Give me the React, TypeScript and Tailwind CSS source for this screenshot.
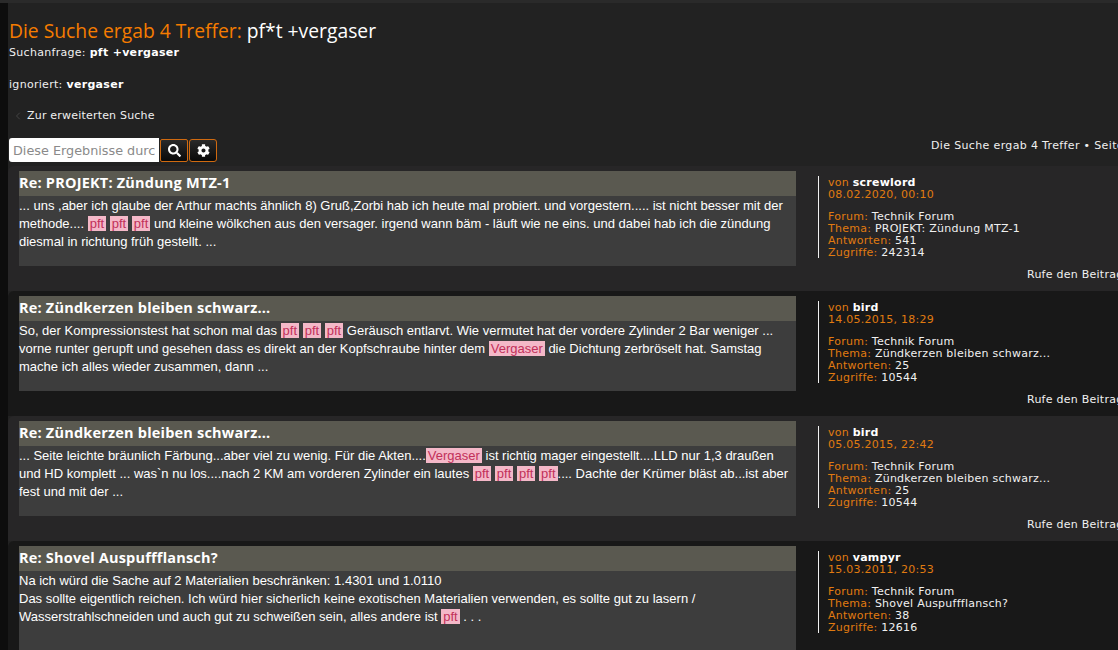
import React from 'react';
import { ChevronLeft } from 'lucide-react';
import { FaCog, FaSearch } from 'react-icons/fa';

const Hl = ({ children }: { children: React.ReactNode }) => (
  <span className="bg-[#f4b8c8] text-[#c2305a] px-[2px]">{children}</span>
);

type Post = {
  title: string;
  body: React.ReactNode;
  author: string;
  date: string;
  topic: string;
  replies: string;
  views: string;
  dark: boolean;
  tall?: boolean;
};

const pft = (
  <>
    <Hl>pft</Hl> <Hl>pft</Hl> <Hl>pft</Hl>
  </>
);

const posts: Post[] = [
  {
    title: 'Re: PROJEKT: Zündung MTZ-1',
    body: (
      <>
        ... uns ,aber ich glaube der Arthur machts ähnlich 8) Gruß,Zorbi hab ich heute mal probiert. und vorgestern..... ist nicht besser mit der methode.... {pft} und kleine wölkchen aus den versager. irgend wann bäm - läuft wie ne eins. und dabei hab ich die zündung diesmal in richtung früh gestellt. ...
      </>
    ),
    author: 'screwlord',
    date: '08.02.2020, 00:10',
    topic: 'PROJEKT: Zündung MTZ-1',
    replies: '541',
    views: '242314',
    dark: false,
  },
  {
    title: 'Re: Zündkerzen bleiben schwarz...',
    body: (
      <>
        So, der Kompressionstest hat schon mal das {pft} Geräusch entlarvt. Wie vermutet hat der vordere Zylinder 2 Bar weniger ... vorne runter gerupft und gesehen dass es direkt an der Kopfschraube hinter dem <Hl>Vergaser</Hl> die Dichtung zerbröselt hat. Samstag mache ich alles wieder zusammen, dann ...
      </>
    ),
    author: 'bird',
    date: '14.05.2015, 18:29',
    topic: 'Zündkerzen bleiben schwarz...',
    replies: '25',
    views: '10544',
    dark: true,
  },
  {
    title: 'Re: Zündkerzen bleiben schwarz...',
    body: (
      <>
        ... Seite leichte bräunlich Färbung...aber viel zu wenig. Für die Akten....<Hl>Vergaser</Hl> ist richtig mager eingestellt....LLD nur 1,3 draußen und HD komplett ... was`n nu los....nach 2 KM am vorderen Zylinder ein lautes {pft} <Hl>pft</Hl>.... Dachte der Krümer bläst ab...ist aber fest und mit der ...
      </>
    ),
    author: 'bird',
    date: '05.05.2015, 22:42',
    topic: 'Zündkerzen bleiben schwarz...',
    replies: '25',
    views: '10544',
    dark: false,
  },
  {
    title: 'Re: Shovel Auspuffflansch?',
    body: (
      <>
        Na ich würd die Sache auf 2 Materialien beschränken: 1.4301 und 1.0110
        <br />
        Das sollte eigentlich reichen. Ich würd hier sicherlich keine exotischen Materialien verwenden, es sollte gut zu lasern / Wasserstrahlschneiden und auch gut zu schweißen sein, alles andere ist <Hl>pft</Hl> . . .
      </>
    ),
    author: 'vampyr',
    date: '15.03.2011, 20:53',
    topic: 'Shovel Auspuffflansch?',
    replies: '38',
    views: '12616',
    dark: true,
    tall: true,
  },
];

const Meta = ({ label, value }: { label: string; value: string }) => (
  <div>
    <span className="text-[#e07b10]">{label}: </span>
    <span className="text-[#f0f0f0]">{value}</span>
  </div>
);

const PostRow = ({ post }: { post: Post }) => (
  <div className={`${post.tall ? 'h-[150px]' : 'h-[125px]'} shrink-0 rounded-tl-[6px] flex pl-[11px] pt-[5px] ${post.dark ? 'bg-[#181818]' : 'bg-[#272627]'}`}>
    <div className={`w-[777px] shrink-0 ${post.tall ? 'h-[120px]' : 'h-[95px]'} bg-[#3d3d3d] flex flex-col`}>
      <div className="h-[25px] shrink-0 bg-[#5a5950] text-[14.5px] leading-[24px] font-bold text-white font-['Open_Sans',sans-serif] tracking-[0.2px]">
        {post.title}
      </div>
      <div className="pt-[1px] text-[13px] leading-[18px] text-white font-['Liberation_Sans',sans-serif]">
        {post.body}
      </div>
    </div>
    <div className="flex-1 min-w-0 overflow-hidden pl-[22px] pt-[5px] text-[11px] leading-[12px] tracking-[0.25px] font-['DejaVu_Sans',sans-serif]">
      <div className="border-l border-[#f0f0f0] pl-[9px] pt-[1px] h-[82px]">
        <div>
          <span className="text-[#e07b10]">von </span>
          <span className="font-bold text-white">{post.author}</span>
        </div>
        <div className="text-[#e07b10] mb-[10px]">{post.date}</div>
        <Meta label="Forum" value="Technik Forum" />
        <Meta label="Thema" value={post.topic} />
        <Meta label="Antworten" value={post.replies} />
        <Meta label="Zugriffe" value={post.views} />
      </div>
      {!post.tall && (
        <div className="mt-[11px] pl-[209px] whitespace-nowrap text-[#f0f0f0]">Rufe den Beitrag auf</div>
      )}
    </div>
  </div>
);

export default function App() {
  return (
    <div className="w-[1118px] h-[650px] overflow-hidden bg-[#0d0d0d] flex flex-col">
      <div className="h-[3px] shrink-0 bg-[#2a2a2a]" />
      <div className="flex-1 min-h-0 ml-[8px] bg-[#222222] flex flex-col pt-[16px] overflow-hidden font-['DejaVu_Sans',sans-serif]">
        <div className="shrink-0 pl-[1px] text-[19.3px] leading-[24px] whitespace-nowrap font-['Open_Sans',sans-serif]">
          <span className="text-[#f57c00] font-medium">Die Suche ergab 4 Treffer: </span>
          <span className="text-white font-medium">pf*t +vergaser</span>
        </div>
        <div className="shrink-0 pl-[1px] mt-[3px] text-[11px] leading-[14px] tracking-[0.3px] text-[#f0f0f0]">
          Suchanfrage: <b className="text-white">pft +vergaser</b>
        </div>
        <div className="shrink-0 pl-[1px] mt-[18px] text-[11px] leading-[14px] tracking-[0.3px] text-[#f0f0f0]">
          ignoriert: <b className="text-white">vergaser</b>
        </div>
        <div className="shrink-0 pl-[4px] mt-[17px] flex items-center text-[11px] leading-[14px] tracking-[0.2px] text-[#f0f0f0]">
          <ChevronLeft size={12} className="text-[#444444] mr-[3px]" />
          Zur erweiterten Suche
        </div>
        <div className="shrink-0 mt-[15px] h-[28px] flex items-start justify-between whitespace-nowrap">
          <div className="flex items-center pl-[1px]">
            <input
              readOnly
              placeholder="Diese Ergebnisse durchsuchen"
              className="w-[150px] h-[24px] bg-white rounded-l-[3px] px-[4px] text-[12.8px] outline-none placeholder:text-[#8a8a8a]"
            />
            <button className="w-[28px] h-[23px] ml-[1px] border border-[#d06a10] rounded-[2px] bg-gradient-to-b from-[#2a2a2a] to-[#0a0a0a] flex items-center justify-center">
              <FaSearch size={13} className="text-white" />
            </button>
            <button className="w-[28px] h-[23px] ml-[1px] border border-[#d06a10] rounded-[3px] bg-gradient-to-b from-[#2a2a2a] to-[#0a0a0a] flex items-center justify-center">
              <FaCog size={13} className="text-white" />
            </button>
          </div>
          <div className="w-[187px] pt-[1px] overflow-hidden text-[11px] leading-[14px] tracking-[0.35px] text-[#f0f0f0]">
            Die Suche ergab 4 Treffer • Seite 1 von 1
          </div>
        </div>
        <div className="shrink-0 flex flex-col">
          {posts.map((p) => (
            <PostRow key={p.date} post={p} />
          ))}
        </div>
      </div>
    </div>
  );
}
